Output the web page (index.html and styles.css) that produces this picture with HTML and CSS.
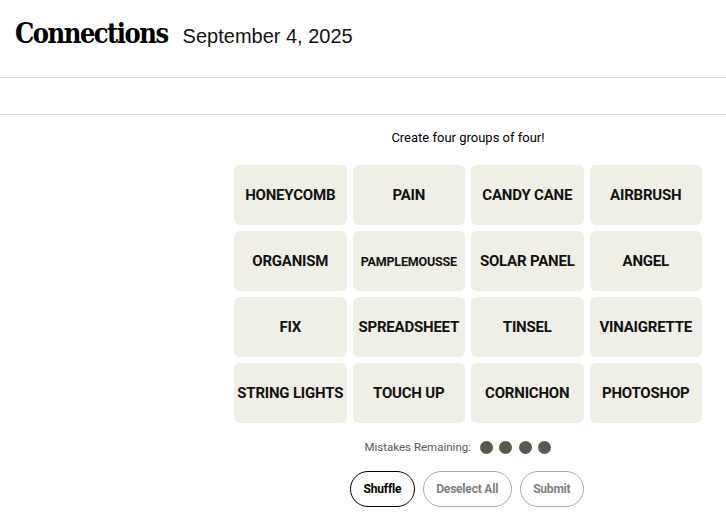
FILE: index.html
```html
<!DOCTYPE html>
<html lang="en">
<head>
<meta charset="utf-8">
<title>Connections</title>
<link rel="stylesheet" href="styles.css">
</head>
<body>
<header class="top">
  <h1 class="title">Connections</h1>
  <span class="date">September 4, 2025</span>
</header>
<div class="subbar"></div>
<main class="game">
  <p class="instruction">Create four groups of four!</p>
  <div class="grid">
    <button class="tile">HONEYCOMB</button>
    <button class="tile">PAIN</button>
    <button class="tile">CANDY CANE</button>
    <button class="tile">AIRBRUSH</button>
    <button class="tile">ORGANISM</button>
    <button class="tile small">PAMPLEMOUSSE</button>
    <button class="tile">SOLAR PANEL</button>
    <button class="tile">ANGEL</button>
    <button class="tile">FIX</button>
    <button class="tile">SPREADSHEET</button>
    <button class="tile">TINSEL</button>
    <button class="tile">VINAIGRETTE</button>
    <button class="tile">STRING LIGHTS</button>
    <button class="tile">TOUCH UP</button>
    <button class="tile">CORNICHON</button>
    <button class="tile">PHOTOSHOP</button>
  </div>
  <div class="mistakes">
    <span class="mistakes-label">Mistakes Remaining:</span>
    <span class="dots"><span class="dot"></span><span class="dot"></span><span class="dot"></span><span class="dot"></span></span>
  </div>
  <div class="actions">
    <button class="pill active">Shuffle</button>
    <button class="pill">Deselect All</button>
    <button class="pill">Submit</button>
  </div>
</main>
</body>
</html>
```
FILE: styles.css
```css
* { box-sizing: border-box; }
body {
  margin: 0;
  background: #fff;
  color: #000;
  font-family: "Liberation Sans", Arial, sans-serif;
}
.top {
  display: flex;
  align-items: baseline;
  height: 78px;
  padding: 16px 0 0 15px;
  border-bottom: 1px solid #dcdcdc;
}
.title {
  margin: 0;
  font-family: "DejaVu Serif Condensed", "DejaVu Serif", "Liberation Serif", serif;
  font-stretch: condensed;
  font-weight: 700;
  font-size: 27px;
  letter-spacing: -1.5px;
  line-height: 36px;
}
.date {
  margin-left: 15px;
  font-family: "Liberation Sans", Arial, sans-serif;
  font-size: 20px;
  color: #121212;
}
.subbar {
  height: 37px;
  border-bottom: 1px solid #dcdcdc;
}
.game {
  width: 468px;
  margin-left: 234px;
  display: flex;
  flex-direction: column;
  align-items: center;
}
.instruction {
  margin: 13px 0 0;
  font-size: 13px;
  line-height: 20px;
  font-family: "Roboto", "Liberation Sans", sans-serif;
  color: #000;
}
.grid {
  margin-top: 17px;
  width: 100%;
  display: grid;
  grid-template-columns: repeat(4, 1fr);
  grid-auto-rows: 60px;
  gap: 6px;
}
.tile {
  border: 0;
  border-radius: 6px;
  background: #efefe6;
  color: #121212;
  font-family: "Roboto", "Liberation Sans", sans-serif;
  font-weight: 700;
  font-size: 15px;
  letter-spacing: -0.2px;
  padding: 0;
  white-space: nowrap;
}
.tile.small { font-size: 12.5px; }
.mistakes {
  margin-top: 14px;
  height: 20px;
  padding-right: 20px;
  display: flex;
  align-items: center;
  gap: 9px;
}
.mistakes-label {
  font-family: "Roboto", "Liberation Sans", sans-serif;
  font-size: 11.5px;
  color: #5a5a5a;
}
.dots { display: flex; gap: 6.5px; }
.dot {
  width: 13px;
  height: 13px;
  border-radius: 50%;
  background: #5a594e;
}
.actions {
  margin-top: 14px;
  margin-right: 2px;
  display: flex;
  gap: 8px;
}
.pill {
  height: 36px;
  padding: 0 12.5px;
  border-radius: 18px;
  background: #fff;
  border: 1px solid #a8a8a8;
  color: #7f7f7f;
  font-family: "Roboto", "Liberation Sans", sans-serif;
  font-weight: 700;
  font-size: 12px;
  letter-spacing: -0.2px;
}
.pill.active {
  border-color: #000;
  color: #000;
}
```
